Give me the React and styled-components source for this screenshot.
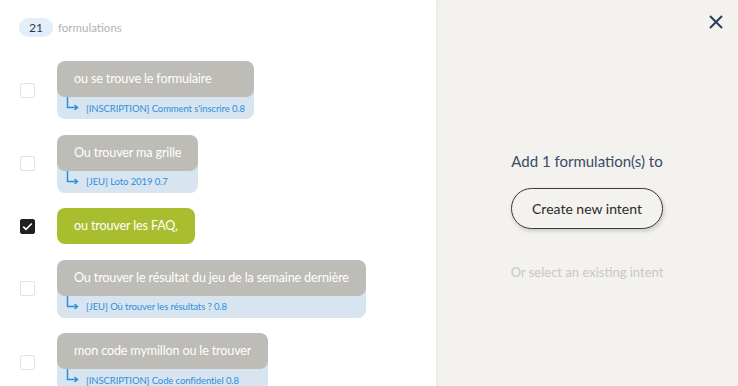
import React from "react";
import styled, { createGlobalStyle, css } from "styled-components";

const GlobalStyle = createGlobalStyle`
  html, body { margin: 0; padding: 0; }
  body { font-family: "Lato", "Liberation Sans", sans-serif; }
`;

const Page = styled.div`
  display: flex;
  width: 738px;
  height: 386px;
  overflow: hidden;
`;

const LeftPanel = styled.div`
  flex: 0 0 436px;
  background: #ffffff;
  padding: 18px 0 0 19px;
  box-sizing: border-box;
  overflow: hidden;
`;

const Header = styled.div`
  display: flex;
  align-items: center;
  gap: 5px;
`;

const CountPill = styled.span`
  display: inline-flex;
  align-items: center;
  justify-content: center;
  height: 19px;
  min-width: 34px;
  box-sizing: border-box;
  border-radius: 10px;
  background: #e2eef9;
  color: #2f3b4c;
  font-family: "Lato", sans-serif;
  font-size: 12px;
`;

const HeaderLabel = styled.span`
  color: #b3b3b3;
  font-family: "Lato", sans-serif;
  font-size: 11.5px;
`;

const List = styled.div`
  display: flex;
  flex-direction: column;
  gap: 15.6px;
  margin-top: 24px;
  padding-left: 1px;
`;

const Row = styled.div`
  display: flex;
  align-items: center;
  gap: 22px;
`;

const Box = styled.span`
  flex: 0 0 auto;
  width: 15px;
  height: 15px;
  box-sizing: border-box;
  border-radius: 2px;
  display: inline-flex;
  align-items: center;
  justify-content: center;
  ${(p) =>
    p.$checked
      ? css`
          background: #202020;
          border: 1px solid #202020;
        `
      : css`
          background: #fff;
          border: 1.5px solid #d9e6f2;
        `}
`;

const Item = styled.div`
  display: inline-flex;
  flex-direction: column;
  align-items: stretch;
`;

const Bubble = styled.div`
  position: relative;
  z-index: 1;
  height: 36px;
  line-height: 36px;
  padding: 0 17px;
  border-radius: 8px;
  background: ${(p) => (p.$selected ? "#a9be2f" : "#bdbcb7")};
  color: #ffffff;
  font-family: "Lato", sans-serif;
  font-size: 12.6px;
  letter-spacing: -0.15px;
  white-space: nowrap;
`;

const Sub = styled.div`
  display: flex;
  align-items: center;
  gap: 7px;
  height: 30px;
  margin-top: -8px;
  padding: 8px 9px 0 9px;
  box-sizing: border-box;
  border-radius: 0 0 8px 8px;
  background: #d8e5f0;
  color: #2b8fdc;
  font-family: "Lato", sans-serif;
  font-size: 9.5px;
  letter-spacing: -0.1px;
  white-space: nowrap;
`;

const ArrowIcon = () => (
  <svg width="13" height="16" viewBox="0 0 13 16" style={{ marginTop: -6 }}>
    <path d="M1.5 0 V10.5 H11" fill="none" stroke="#2b8fdc" strokeWidth="1.5" />
    <path d="M8.5 8 L11.5 10.5 L8.5 13" fill="none" stroke="#2b8fdc" strokeWidth="1.5" />
  </svg>
);

const CheckIcon = () => (
  <svg width="11" height="9" viewBox="0 0 11 9">
    <path d="M1.2 4.6 L4 7.3 L9.8 1.5" fill="none" stroke="#fff" strokeWidth="1.6" />
  </svg>
);

const RightPanel = styled.div`
  position: relative;
  flex: 1;
  background: #f3f2ee;
  box-shadow: inset 3px 0 4px -2px rgba(0, 0, 0, 0.05);
  display: flex;
  flex-direction: column;
  align-items: center;
  padding-top: 150px;
  box-sizing: border-box;
  font-family: "Lato", sans-serif;
`;

const CloseButton = styled.button`
  position: absolute;
  top: 12px;
  right: 12px;
  width: 20px;
  height: 20px;
  padding: 0;
  border: none;
  background: transparent;
  display: flex;
  align-items: center;
  justify-content: center;
`;

const Title = styled.div`
  color: #3a4a66;
  font-size: 15px;
  line-height: 22px;
`;

const PrimaryButton = styled.button`
  margin-top: 16px;
  width: 152px;
  height: 41px;
  border-radius: 21px;
  border: 1.5px solid #3a3a3a;
  background: #f3f2ee;
  box-shadow: 1px 2px 4px rgba(0, 0, 0, 0.18);
  color: #2b2b2b;
  font-family: "Lato", sans-serif;
  font-size: 14px;
`;

const Hint = styled.div`
  margin-top: 35px;
  color: #c9c8c3;
  font-size: 13px;
`;

const items = [
  { text: "ou se trouve le formulaire", sub: "[INSCRIPTION] Comment s'inscrire 0.8" },
  { text: "Ou trouver ma grille", sub: "[JEU] Loto 2019 0.7" },
  { text: "ou trouver les FAQ,", selected: true },
  { text: "Ou trouver le résultat du jeu de la semaine dernière", sub: "[JEU] Où trouver les résultats ? 0.8" },
  { text: "mon code mymillon ou le trouver", sub: "[INSCRIPTION] Code confidentiel 0.8" },
];

export default function App() {
  return (
    <Page>
      <GlobalStyle />
      <LeftPanel>
        <Header>
          <CountPill>21</CountPill>
          <HeaderLabel>formulations</HeaderLabel>
        </Header>
        <List>
          {items.map((it) => (
            <Row key={it.text}>
              <Box $checked={it.selected}>{it.selected && <CheckIcon />}</Box>
              <Item>
                <Bubble $selected={it.selected}>{it.text}</Bubble>
                {it.sub && (
                  <Sub>
                    <ArrowIcon />
                    <span>{it.sub}</span>
                  </Sub>
                )}
              </Item>
            </Row>
          ))}
        </List>
      </LeftPanel>
      <RightPanel>
        <CloseButton aria-label="close">
          <svg width="14" height="14" viewBox="0 0 14 14">
            <path d="M1 1 L13 13 M13 1 L1 13" stroke="#2c3d58" strokeWidth="2" />
          </svg>
        </CloseButton>
        <Title>Add 1 formulation(s) to</Title>
        <PrimaryButton>Create new intent</PrimaryButton>
        <Hint>Or select an existing intent</Hint>
      </RightPanel>
    </Page>
  );
}
